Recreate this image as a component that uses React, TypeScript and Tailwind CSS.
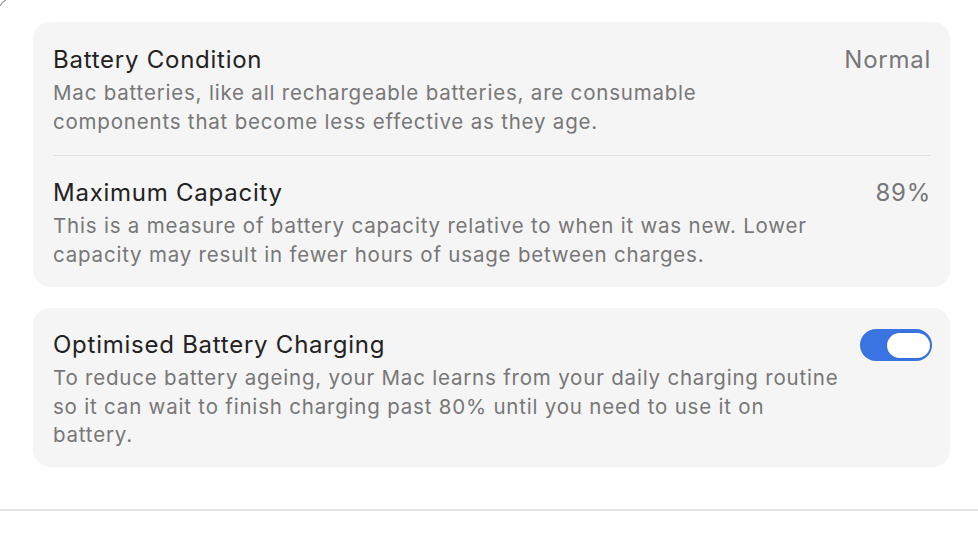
import React from "react";

function Row({
  title,
  desc,
  value,
  className,
}: {
  title: string;
  desc: React.ReactNode;
  value: string;
  className: string;
}) {
  return (
    <div className={`flex items-start justify-between ${className}`}>
      <div className="flex flex-col">
        <div className="text-[24px] leading-[36px] tracking-[0.75px] text-[#222222]">{title}</div>
        <div className="mt-[1px] text-[20.5px] leading-[28.5px] tracking-[0.8px] text-[#777777]">{desc}</div>
      </div>
      <div className="text-[24px] leading-[36px] tracking-[0.75px] text-[#777777]">{value}</div>
    </div>
  );
}

export default function App() {
  return (
    <div
      className="relative w-[978px] h-[534px] bg-white overflow-hidden"
      style={{ fontFamily: "Inter, 'Noto Sans', sans-serif" }}
    >
      <svg className="absolute left-0 top-0" width="8" height="8" viewBox="0 0 8 8">
        <path d="M0 6 Q2 2 6 0" stroke="#9a9a9a" strokeWidth="1.2" fill="none" />
      </svg>
      <div className="pt-[22px] pl-[33px]">
        <div className="w-[917px] rounded-[17px] bg-[#f5f5f5] px-[20px] pr-[19px]">
          <Row
            className="pt-[20px] pb-[19px]"
            title="Battery Condition"
            value="Normal"
            desc={
              <>
                Mac batteries, like all rechargeable batteries, are consumable
                <br />
                components that become less effective as they age.
              </>
            }
          />
          <div className="h-px bg-[#e2e2e2]" />
          <Row
            className="pt-[19px] pb-[18px]"
            title="Maximum Capacity"
            value="89%"
            desc={
              <>
                This is a measure of battery capacity relative to when it was new. Lower
                <br />
                capacity may result in fewer hours of usage between charges.
              </>
            }
          />
        </div>
        <div className="mt-[21px] w-[917px] rounded-[17px] bg-[#f5f5f5] pl-[20px] pr-[18px] pt-[19px] pb-[17px] flex items-start justify-between">
          <div className="flex flex-col">
            <div className="text-[24px] leading-[36px] tracking-[0.75px] text-[#222222]">
              Optimised Battery Charging
            </div>
            <div className="mt-[1px] text-[20.5px] leading-[28.5px] tracking-[0.8px] text-[#777777]">
              To reduce battery ageing, your Mac learns from your daily charging routine
              <br />
              so it can wait to finish charging past 80% until you need to use it on
              <br />
              battery.
            </div>
          </div>
          <div className="mt-[2px] w-[72px] h-[32px] shrink-0 rounded-full bg-[#3a73e2] flex items-center justify-end pr-[2px]">
            <div className="w-[43px] h-[25px] rounded-full bg-white shadow-[0_0_2px_rgba(0,0,0,0.15)]" />
          </div>
        </div>
      </div>
      <div className="absolute left-0 right-0 top-[509px] h-[2px] bg-[#e4e4e4]" />
    </div>
  );
}
